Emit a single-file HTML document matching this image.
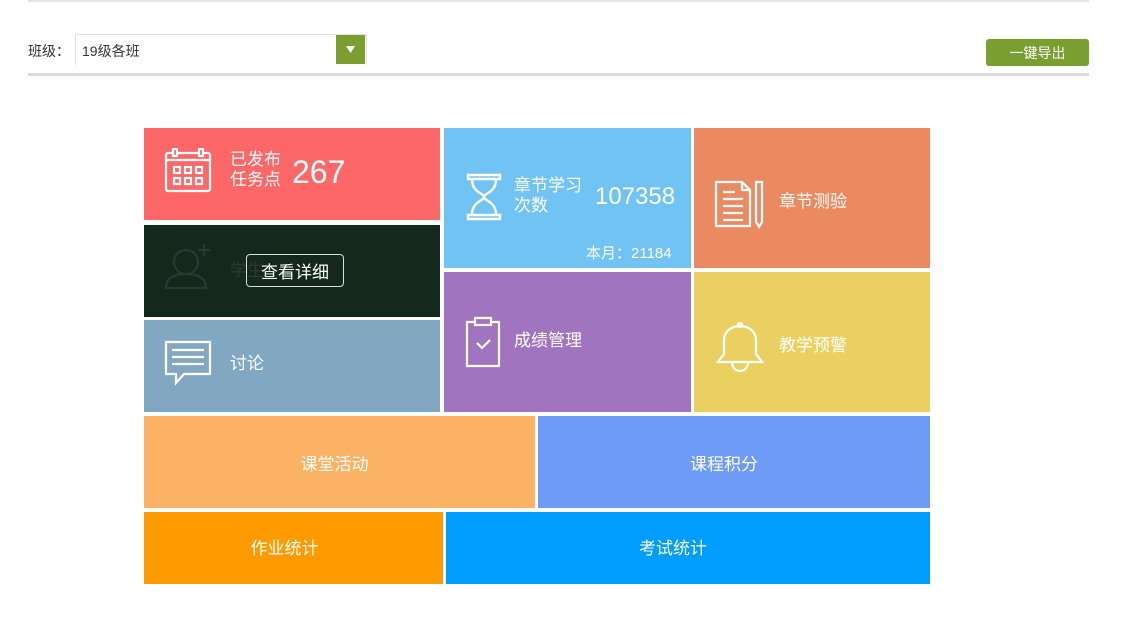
<!DOCTYPE html>
<html><head><meta charset="utf-8"><style>
*{margin:0;padding:0;box-sizing:border-box}
body{width:1135px;height:625px;background:#fff;font-family:"Liberation Sans","Noto Sans CJK SC",sans-serif;position:relative;overflow:hidden}
.a{position:absolute}
.t{position:absolute;color:#fff;overflow:hidden}
.c{display:flex;align-items:center;justify-content:center;font-size:17px}
.lb{position:absolute;font-size:17px;color:#fff;line-height:20px}
</style></head><body>
<div class="a" style="left:28px;top:0;width:1061px;height:2px;background:#e4e4e4"></div>
<div class="a" style="left:28px;top:41px;font-size:14px;color:#333">班级：</div>
<div class="a" style="left:75px;top:34px;width:292px;height:31px;border:1px solid #e2e2e2;border-bottom:none;background:#fff"></div>
<div class="a" style="left:82px;top:41px;font-size:14px;color:#333">19级各班</div>
<div class="a" style="left:336px;top:35px;width:29px;height:29px;background:#7a9e2f"><svg width="29" height="29"><path d="M10 11h9l-4.5 7z" fill="#fff"/></svg></div>
<div class="a" style="left:28px;top:73px;width:1061px;height:3px;background:#dcdcdc"></div>
<div class="a" style="left:986px;top:39px;width:103px;height:27px;background:#7a9e2f;border-radius:3px;color:#fff;font-size:14px;display:flex;align-items:center;justify-content:center">一键导出</div>

<div class="t" style="left:144px;top:128px;width:296px;height:92px;background:#fd6767">
<svg class="a" style="left:20px;top:20px" width="50" height="46" fill="none" stroke="#fff" stroke-width="2.2"><rect x="2" y="5" width="44" height="38" rx="2"/><line x1="2" y1="12" x2="46" y2="12"/><rect x="9" y="1" width="4" height="7" fill="#fd6767"/><rect x="35" y="1" width="4" height="7" fill="#fd6767"/><rect x="10" y="19" width="6" height="6"/><rect x="21" y="19" width="6" height="6"/><rect x="32" y="19" width="6" height="6"/><rect x="10" y="30" width="6" height="6"/><rect x="21" y="30" width="6" height="6"/><rect x="32" y="30" width="6" height="6"/></svg>
<div class="lb" style="left:86px;top:22px">已发布<br>任务点</div>
<div class="a" style="left:148px;top:26px;font-size:32px">267</div>
</div>
<div class="t" style="left:144px;top:225px;width:296px;height:92px;background:#14281c">
<svg class="a" style="left:20px;top:16px" width="50" height="50" fill="none" stroke="#2b3a30" stroke-width="2.2"><circle cx="22" cy="21" r="12"/><path d="M2 47c0-10 8-14 20-14s20 4 20 14z"/><path d="M40 3v12M34 9h12"/></svg>
<div class="lb" style="left:86px;top:36px;color:#2b3a30">学生</div>
<div class="a" style="left:102px;top:29px;width:98px;height:33px;border:1.5px solid #ddd;border-radius:4px;font-size:17px;display:flex;align-items:center;justify-content:center">查看详细</div>
</div>
<div class="t" style="left:144px;top:320px;width:296px;height:92px;background:#82a7c3">
<svg class="a" style="left:20px;top:20px" width="50" height="46" fill="none" stroke="#fff" stroke-width="2.2"><path d="M2 2h44v32H20l-8 9v-9H2z"/><path d="M8 10h32M8 17h32M8 24h32"/></svg>
<div class="lb" style="left:86px;top:34px">讨论</div>
</div>
<div class="t" style="left:444px;top:128px;width:247px;height:140px;background:#71c3f4">
<svg class="a" style="left:22px;top:45px" width="36" height="48" fill="none" stroke="#fff" stroke-width="2.4"><path d="M2 2h32v4H2zM2 42h32v4H2z"/><path d="M6 6c0 14 12 14 12 18s-12 4-12 18M30 6c0 14-12 14-12 18s12 4 12 18"/></svg>
<div class="lb" style="left:70px;top:48px">章节学习<br>次数</div>
<div class="a" style="left:151px;top:55px;font-size:24px">107358</div>
<div class="a" style="left:142px;top:114px;font-size:15px">本月：21184</div>
</div>
<div class="t" style="left:444px;top:272px;width:247px;height:140px;background:#a074be">
<svg class="a" style="left:21px;top:44px" width="36" height="52" fill="none" stroke="#fff" stroke-width="2.2"><path d="M10 6H2v44h32V6h-8"/><path d="M10 2h16v7H10z"/><path d="M12 27l5 5 8-8"/></svg>
<div class="lb" style="left:70px;top:59px">成绩管理</div>
</div>
<div class="t" style="left:694px;top:128px;width:236px;height:140px;background:#eb8a61">
<svg class="a" style="left:20px;top:52px" width="54" height="50" fill="none" stroke="#fff" stroke-width="2.2"><path d="M2 2h26l8 8v36H2z"/><path d="M28 2v8h8"/><path d="M9 12h12M9 19h20M9 26h20M9 33h20M9 40h20"/><path d="M42 2h6v40l-3 5-3-5z"/></svg>
<div class="lb" style="left:85px;top:64px">章节测验</div>
</div>
<div class="t" style="left:694px;top:272px;width:236px;height:140px;background:#ead060">
<svg class="a" style="left:22px;top:50px" width="48" height="54" fill="none" stroke="#fff" stroke-width="2.2"><path d="M2 40h44l-6-8V18C40 9 32 4 24 4S8 9 8 18v14z"/><circle cx="24" cy="3" r="2"/><path d="M16 40c0 6 4 9 8 9s8-3 8-9"/></svg>
<div class="lb" style="left:85px;top:64px">教学预警</div>
</div>
<div class="t c" style="left:144px;top:416px;width:391px;height:92px;background:#fbb265;padding-right:10px">课堂活动</div>
<div class="t c" style="left:538px;top:416px;width:392px;height:92px;background:#6d9bf7;padding-right:20px">课程积分</div>
<div class="t c" style="left:144px;top:512px;width:299px;height:72px;background:#ff9a00;padding-right:18px;padding-bottom:4px">作业统计</div>
<div class="t c" style="left:446px;top:512px;width:484px;height:72px;background:#009cff;padding-right:30px;padding-bottom:4px">考试统计</div>
</body></html>
